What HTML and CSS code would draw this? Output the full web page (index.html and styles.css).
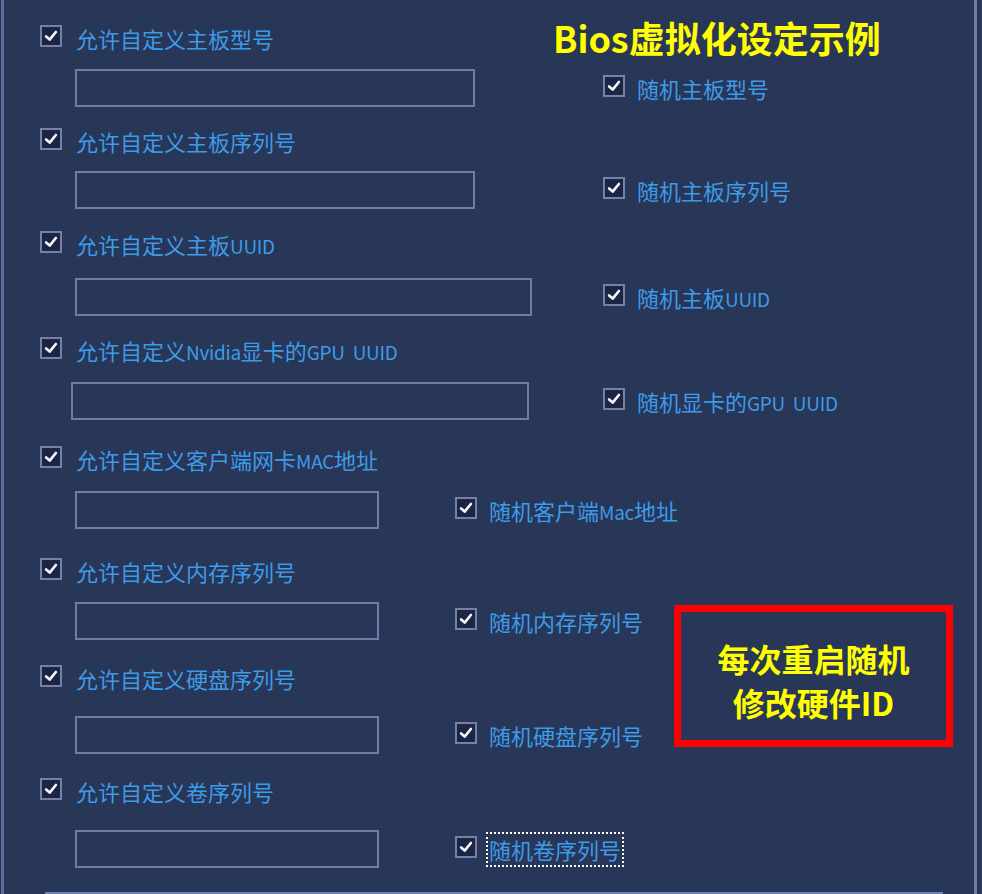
FILE: index.html
```html
<!DOCTYPE html>
<html lang="zh-CN">
<head>
<meta charset="utf-8">
<title>Bios虚拟化设定示例</title>
<link rel="stylesheet" href="styles.css">
</head>
<body>
<div class="frame">
  <section class="sec s1">
    <div class="head"><span class="cb"><svg viewBox="0 0 18 18"><path d="M3.5 9.5 L7.5 13 L14.5 4.5"/></svg></span><span class="lbl">允许自定义主板型号</span></div>
    <div class="sub m18"><span class="field w400"></span><span class="opt r128"><span class="cb"><svg viewBox="0 0 18 18"><path d="M3.5 9.5 L7.5 13 L14.5 4.5"/></svg></span><span class="lbl">随机主板型号</span></span></div>
  </section>
  <section class="sec s2">
    <div class="head"><span class="cb"><svg viewBox="0 0 18 18"><path d="M3.5 9.5 L7.5 13 L14.5 4.5"/></svg></span><span class="lbl">允许自定义主板序列号</span></div>
    <div class="sub m17"><span class="field w400"></span><span class="opt r128"><span class="cb"><svg viewBox="0 0 18 18"><path d="M3.5 9.5 L7.5 13 L14.5 4.5"/></svg></span><span class="lbl">随机主板序列号</span></span></div>
  </section>
  <section class="sec s3">
    <div class="head"><span class="cb"><svg viewBox="0 0 18 18"><path d="M3.5 9.5 L7.5 13 L14.5 4.5"/></svg></span><span class="lbl">允许自定义主板<span class="lat">UUID</span></span></div>
    <div class="sub m21"><span class="field w457"></span><span class="opt r71"><span class="cb"><svg viewBox="0 0 18 18"><path d="M3.5 9.5 L7.5 13 L14.5 4.5"/></svg></span><span class="lbl">随机主板<span class="lat">UUID</span></span></span></div>
  </section>
  <section class="sec s4">
    <div class="head"><span class="cb"><svg viewBox="0 0 18 18"><path d="M3.5 9.5 L7.5 13 L14.5 4.5"/></svg></span><span class="lbl">允许自定义<span class="lat">Nvidia</span>显卡的<span class="lat">GPU&nbsp;&nbsp;UUID</span></span></div>
    <div class="sub m19 shift"><span class="field w458"></span><span class="opt r74"><span class="cb"><svg viewBox="0 0 18 18"><path d="M3.5 9.5 L7.5 13 L14.5 4.5"/></svg></span><span class="lbl">随机显卡的<span class="lat">GPU&nbsp;&nbsp;UUID</span></span></span></div>
  </section>
  <section class="sec s5">
    <div class="head"><span class="cb"><svg viewBox="0 0 18 18"><path d="M3.5 9.5 L7.5 13 L14.5 4.5"/></svg></span><span class="lbl">允许自定义客户端网卡<span class="lat">MAC</span>地址</span></div>
    <div class="sub m19"><span class="field w304"></span><span class="opt r76"><span class="cb"><svg viewBox="0 0 18 18"><path d="M3.5 9.5 L7.5 13 L14.5 4.5"/></svg></span><span class="lbl">随机客户端<span class="lat">Mac</span>地址</span></span></div>
  </section>
  <section class="sec s6">
    <div class="head"><span class="cb"><svg viewBox="0 0 18 18"><path d="M3.5 9.5 L7.5 13 L14.5 4.5"/></svg></span><span class="lbl">允许自定义内存序列号</span></div>
    <div class="sub m18"><span class="field w304"></span><span class="opt r76"><span class="cb"><svg viewBox="0 0 18 18"><path d="M3.5 9.5 L7.5 13 L14.5 4.5"/></svg></span><span class="lbl">随机内存序列号</span></span></div>
  </section>
  <section class="sec s7">
    <div class="head"><span class="cb"><svg viewBox="0 0 18 18"><path d="M3.5 9.5 L7.5 13 L14.5 4.5"/></svg></span><span class="lbl">允许自定义硬盘序列号</span></div>
    <div class="sub m25"><span class="field w304"></span><span class="opt r76"><span class="cb"><svg viewBox="0 0 18 18"><path d="M3.5 9.5 L7.5 13 L14.5 4.5"/></svg></span><span class="lbl">随机硬盘序列号</span></span></div>
  </section>
  <section class="sec s8">
    <div class="head"><span class="cb"><svg viewBox="0 0 18 18"><path d="M3.5 9.5 L7.5 13 L14.5 4.5"/></svg></span><span class="lbl">允许自定义卷序列号</span></div>
    <div class="sub m26"><span class="field w304"></span><span class="opt r76"><span class="cb"><svg viewBox="0 0 18 18"><path d="M3.5 9.5 L7.5 13 L14.5 4.5"/></svg></span><span class="lbl focus">随机卷序列号</span></span></div>
  </section>
  <div class="bar"></div>

  <div class="title">Bios虚拟化设定示例</div>
  <div class="note">每次重启随机<br>修改硬件ID</div>
</div>
</body>
</html>
```
FILE: styles.css
```css
html, body {
  margin: 0;
  padding: 0;
}
body {
  width: 982px;
  height: 894px;
  overflow: hidden;
  background: #283657;
  font-family: "Noto Sans CJK SC", "Noto Sans", sans-serif;
}
.frame {
  position: relative;
  box-sizing: border-box;
  margin-left: 1px;
  width: 976px;
  height: 894px;
  border-left: 3px solid #5b6e99;
  border-right: 3px solid #6b7ea8;
  padding-top: 25px;
  padding-left: 36px;
}
.sec { display: block; }
.s2 { margin-top: 21px; }
.s3 { margin-top: 22px; }
.s4 { margin-top: 21px; }
.s5 { margin-top: 26px; }
.s6 { margin-top: 29px; }
.s7 { margin-top: 25px; }
.s8 { margin-top: 24px; }

.head {
  display: flex;
  align-items: flex-start;
  height: 26px;
}
.cb {
  box-sizing: border-box;
  width: 22px;
  height: 22px;
  flex: none;
  border: 2px solid #7582a6;
  background: #1c2543;
  display: flex;
  align-items: center;
  justify-content: center;
}
.cb svg {
  width: 16px;
  height: 16px;
}
.cb path {
  fill: none;
  stroke: #f4f6fb;
  stroke-width: 3;
  stroke-linecap: round;
  stroke-linejoin: round;
}
.lbl {
  margin-top: 2px;
  font-size: 22px;
  line-height: 22px;
  color: #3d9be8;
  white-space: nowrap;
}
.lat {
  font-size: 19px;
  letter-spacing: -0.3px;
}
.head .lbl { margin-left: 14px; }
.opt .lbl { margin-left: 12px; }

.sub {
  display: flex;
  align-items: center;
  margin-left: 35px;
}
.sub.shift { margin-left: 31px; }
.m17 { margin-top: 17px; }
.m18 { margin-top: 18px; }
.m19 { margin-top: 19px; }
.m21 { margin-top: 21px; }
.m25 { margin-top: 25px; }
.m26 { margin-top: 26px; }

.field {
  box-sizing: border-box;
  height: 38px;
  border: 2px solid #6a7ea9;
  background: #283657;
  flex: none;
}
.w400 { width: 400px; }
.w457 { width: 457px; }
.w458 { width: 458px; }
.w304 { width: 304px; }

.opt {
  display: flex;
  align-items: flex-start;
  height: 26px;
}
.r128 { margin-left: 128px; }
.r71 { margin-left: 71px; }
.r74 { margin-left: 74px; }
.r76 { margin-left: 76px; }

.focus { position: relative; }
.focus::after {
  content: "";
  position: absolute;
  left: -3px;
  right: -3px;
  top: -6px;
  bottom: -7px;
  border: 2px dotted #ffffff;
}

.bar {
  margin-top: 24px;
  margin-left: 5px;
  width: 898px;
  height: 6px;
  background: #7184ae;
}

.title {
  position: absolute;
  left: 549px;
  top: 19px;
  font-size: 36px;
  line-height: 36px;
  font-weight: 700;
  color: #ffff00;
  white-space: nowrap;
}
.note {
  position: absolute;
  left: 670px;
  top: 605px;
  box-sizing: border-box;
  width: 279px;
  height: 142px;
  border: 7px solid #ff0000;
  padding-top: 8px;
  display: flex;
  align-items: center;
  justify-content: center;
  text-align: center;
  font-size: 32px;
  line-height: 44px;
  font-weight: 700;
  color: #ffff00;
}
```
